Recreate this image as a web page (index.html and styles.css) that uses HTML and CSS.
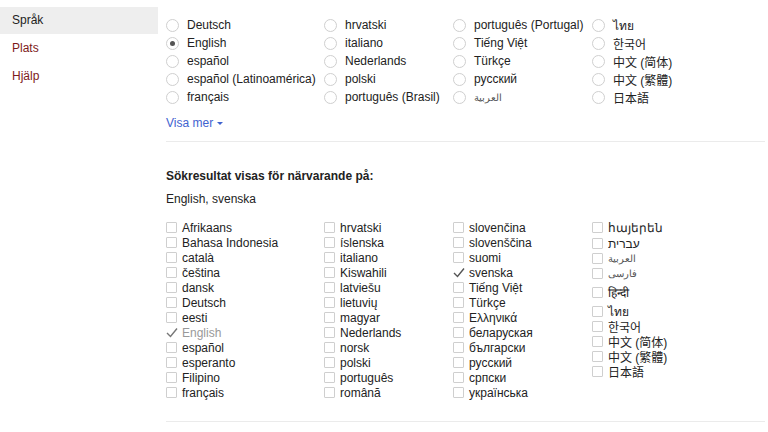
FILE: index.html
```html
<!DOCTYPE html>
<html>
<head>
    <title>Inställningar</title>
    <link rel="stylesheet" href="styles.css">
</head>
<body>
    <div class="page">
        <div class="sidebar">
            <div class="nav-item selected">Språk</div>
            <div class="nav-item">Plats</div>
            <div class="nav-item">Hjälp</div>
        </div>

        <div class="main">
            <div class="radio-grid">
                <div class="col col-1">
                    <div class="radio-row"><span class="radio"></span>Deutsch</div>
                    <div class="radio-row"><span class="radio checked"></span>English</div>
                    <div class="radio-row"><span class="radio"></span>español</div>
                    <div class="radio-row"><span class="radio"></span>español (Latinoamérica)</div>
                    <div class="radio-row"><span class="radio"></span>français</div>
                </div>
                <div class="col col-2">
                    <div class="radio-row"><span class="radio"></span>hrvatski</div>
                    <div class="radio-row"><span class="radio"></span>italiano</div>
                    <div class="radio-row"><span class="radio"></span>Nederlands</div>
                    <div class="radio-row"><span class="radio"></span>polski</div>
                    <div class="radio-row"><span class="radio"></span>português (Brasil)</div>
                </div>
                <div class="col col-3">
                    <div class="radio-row"><span class="radio"></span>português (Portugal)</div>
                    <div class="radio-row"><span class="radio"></span>Tiếng Việt</div>
                    <div class="radio-row"><span class="radio"></span>Türkçe</div>
                    <div class="radio-row"><span class="radio"></span>русский</div>
                    <div class="radio-row"><span class="radio"></span><span class="small-script">العربية</span></div>
                </div>
                <div class="col col-4">
                    <div class="radio-row"><span class="radio"></span>ไทย</div>
                    <div class="radio-row"><span class="radio"></span>한국어</div>
                    <div class="radio-row"><span class="radio"></span>中文 (简体)</div>
                    <div class="radio-row"><span class="radio"></span>中文 (繁體)</div>
                    <div class="radio-row"><span class="radio"></span>日本語</div>
                </div>
            </div>

            <div class="more"><a href="#">Visa mer</a><span class="caret"></span></div>

            <div class="divider"></div>

            <div class="results-title">Sökresultat visas för närvarande på:</div>
            <div class="results-langs">English, svenska</div>

            <div class="check-grid">
                <div class="col col-1">
                    <div class="check-row"><span class="box"></span>Afrikaans</div>
                    <div class="check-row"><span class="box"></span>Bahasa Indonesia</div>
                    <div class="check-row"><span class="box"></span>català</div>
                    <div class="check-row"><span class="box"></span>čeština</div>
                    <div class="check-row"><span class="box"></span>dansk</div>
                    <div class="check-row"><span class="box"></span>Deutsch</div>
                    <div class="check-row"><span class="box"></span>eesti</div>
                    <div class="check-row disabled"><span class="tick"><svg width="12" height="11" viewBox="0 0 12 11"><path d="M1 6 L4.5 9.5 L11 1.5" fill="none" stroke="#777" stroke-width="1.4"/></svg></span>English</div>
                    <div class="check-row"><span class="box"></span>español</div>
                    <div class="check-row"><span class="box"></span>esperanto</div>
                    <div class="check-row"><span class="box"></span>Filipino</div>
                    <div class="check-row"><span class="box"></span>français</div>
                </div>
                <div class="col col-2">
                    <div class="check-row"><span class="box"></span>hrvatski</div>
                    <div class="check-row"><span class="box"></span>íslenska</div>
                    <div class="check-row"><span class="box"></span>italiano</div>
                    <div class="check-row"><span class="box"></span>Kiswahili</div>
                    <div class="check-row"><span class="box"></span>latviešu</div>
                    <div class="check-row"><span class="box"></span>lietuvių</div>
                    <div class="check-row"><span class="box"></span>magyar</div>
                    <div class="check-row"><span class="box"></span>Nederlands</div>
                    <div class="check-row"><span class="box"></span>norsk</div>
                    <div class="check-row"><span class="box"></span>polski</div>
                    <div class="check-row"><span class="box"></span>português</div>
                    <div class="check-row"><span class="box"></span>română</div>
                </div>
                <div class="col col-3">
                    <div class="check-row"><span class="box"></span>slovenčina</div>
                    <div class="check-row"><span class="box"></span>slovenščina</div>
                    <div class="check-row"><span class="box"></span>suomi</div>
                    <div class="check-row"><span class="tick"><svg width="12" height="11" viewBox="0 0 12 11"><path d="M1 6 L4.5 9.5 L11 1.5" fill="none" stroke="#555" stroke-width="1.4"/></svg></span>svenska</div>
                    <div class="check-row"><span class="box"></span>Tiếng Việt</div>
                    <div class="check-row"><span class="box"></span>Türkçe</div>
                    <div class="check-row"><span class="box"></span>Ελληνικά</div>
                    <div class="check-row"><span class="box"></span>беларуская</div>
                    <div class="check-row"><span class="box"></span>български</div>
                    <div class="check-row"><span class="box"></span>русский</div>
                    <div class="check-row"><span class="box"></span>српски</div>
                    <div class="check-row"><span class="box"></span>українська</div>
                </div>
                <div class="col col-4">
                    <div class="check-row"><span class="box"></span>հայերեն</div>
                    <div class="check-row push-1"><span class="box"></span>עברית</div>
                    <div class="check-row"><span class="box"></span><span class="small-script">العربية</span></div>
                    <div class="check-row"><span class="box"></span><span class="small-script">فارسی</span></div>
                    <div class="check-row push-4"><span class="box"></span>हिन्दी</div>
                    <div class="check-row push-4"><span class="box"></span>ไทย</div>
                    <div class="check-row"><span class="box"></span>한국어</div>
                    <div class="check-row"><span class="box"></span>中文 (简体)</div>
                    <div class="check-row"><span class="box"></span>中文 (繁體)</div>
                    <div class="check-row"><span class="box"></span>日本語</div>
                </div>
            </div>

            <div class="divider bottom"></div>
        </div>
    </div>
</body>
</html>
```

FILE: styles.css
```css
body { margin: 0; background: #fff; font-family: "Liberation Sans", Arial, "Noto Sans CJK SC", sans-serif; font-size: 12px; color: #222; }
.page { display: flex; }

.sidebar { width: 158px; padding-top: 7px; flex-shrink: 0; }
.nav-item { height: 28px; line-height: 26px; padding-left: 12px; color: #7d1a1a; }
.nav-item.selected { background-color: #eeeeee; color: #222; height: 27px; margin-bottom: 1px; }

.main { margin-left: 8px; width: 599px; padding-top: 16px; }

.radio-grid, .check-grid { display: flex; }
.radio-grid .col-1 { width: 158px; }
.radio-grid .col-2 { width: 129px; }
.radio-grid .col-3 { width: 139px; }
.check-grid .col-1 { width: 158px; }
.check-grid .col-2 { width: 129px; }
.check-grid .col-3 { width: 139px; }

.radio-row { height: 18px; display: flex; align-items: center; white-space: nowrap; }
.radio { width: 13px; height: 13px; box-sizing: border-box; border: 1px solid #cfcfcf; border-radius: 50%; margin-right: 8px; display: flex; align-items: center; justify-content: center; flex-shrink: 0; }
.radio.checked::after { content: ""; width: 5px; height: 5px; border-radius: 50%; background: #555; }
.small-script { font-size: 10px; color: #555; }

.more { margin-top: 8px; height: 18px; display: flex; align-items: center; }
.more a { color: #3f63cf; text-decoration: none; }
.caret { width: 0; height: 0; margin-left: 4px; margin-top: 1px; border-left: 3px solid transparent; border-right: 3px solid transparent; border-top: 3px solid #3f63cf; }

.divider { height: 1px; background: #ebebeb; margin-top: 9px; }
.divider.bottom { margin-top: 21px; }

.results-title { font-weight: bold; line-height: 18px; margin-top: 25px; }
.results-langs { line-height: 18px; margin-top: 5px; }

.check-grid { margin-top: 12px; }
.check-row { height: 15px; display: flex; align-items: center; white-space: nowrap; }
.check-row.push-1 { margin-top: 1px; }
.check-row.push-4 { margin-top: 4px; }
.box { width: 11px; height: 11px; box-sizing: border-box; border: 1px solid #cfcfcf; border-radius: 1px; margin-right: 5px; flex-shrink: 0; }
.tick { width: 12px; height: 11px; margin-right: 4px; display: flex; flex-shrink: 0; }
.check-row.disabled { color: #999; }
```
